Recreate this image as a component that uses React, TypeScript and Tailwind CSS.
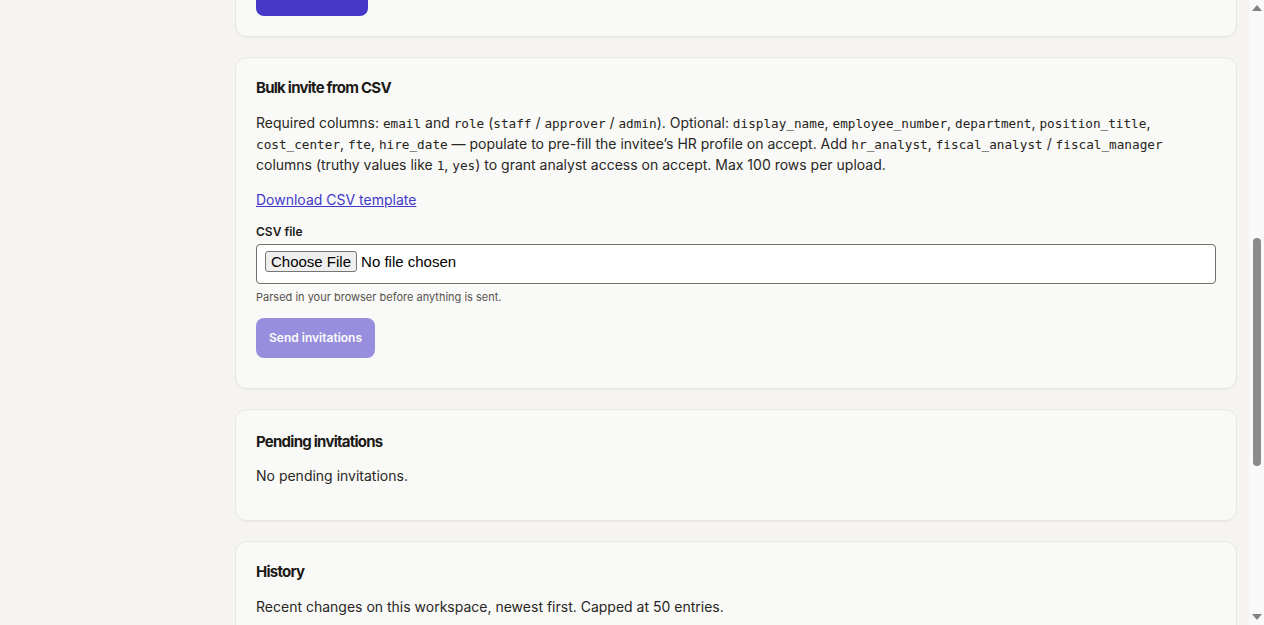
import { useLayoutEffect, useRef } from "react";

const Code = ({ children }: { children: string }) => (
  <code className="font-['DejaVu_Sans_Mono',monospace] text-[12.7px] leading-none text-[#262420]">{children}</code>
);

const Card = ({
  children,
  className = "",
  innerRef,
}: {
  children: React.ReactNode;
  className?: string;
  innerRef?: React.Ref<HTMLDivElement>;
}) => (
  <section
    ref={innerRef}
    className={`rounded-xl border border-[#e9e7e3] bg-[#f9f9f7] px-5 shadow-[0_1px_2px_rgba(0,0,0,0.04)] ${className}`}
  >
    {children}
  </section>
);

const CardTitle = ({ children }: { children: string }) => (
  <h2 className="text-[15px] leading-6 font-bold tracking-[-0.05em] text-[#1c1a17]">{children}</h2>
);

const history = [
  { who: "Dana Whitfield", what: "invited m.ortiz@northwind.org as approver", when: "2 days ago" },
  { who: "Dana Whitfield", what: "changed role of j.kim@northwind.org to admin", when: "5 days ago" },
  { who: "Sam Patel", what: "revoked invitation for temp@northwind.org", when: "1 week ago" },
  { who: "Sam Patel", what: "granted fiscal_analyst to r.lee@northwind.org", when: "2 weeks ago" },
  { who: "Dana Whitfield", what: "bulk invited 12 members from CSV", when: "3 weeks ago" },
  { who: "Dana Whitfield", what: "created workspace", when: "1 month ago" },
];

// browser scrollbar as it shows in the capture
const ScrollbarOverlay = () => (
  <div aria-hidden className="fixed top-0 right-0 flex h-screen w-[15px] flex-col items-center bg-[#f9f9f9]">
    <svg className="mt-[5px] shrink-0" width="10" height="6" viewBox="0 0 10 6">
      <path d="M5 0L10 6H0z" fill="#828282" />
    </svg>
    <div className="mt-[227px] h-[228px] w-[8px] shrink-0 rounded-full bg-[#8b8b8b]" />
    <div className="flex-1" />
    <svg className="mb-[5px] shrink-0" width="10" height="6" viewBox="0 0 10 6">
      <path d="M0 0H10L5 6z" fill="#828282" />
    </svg>
  </div>
);

export default function App() {
  const bulkRef = useRef<HTMLDivElement>(null);

  // keep the view on the CSV card, like the captured page
  useLayoutEffect(() => {
    const el = bulkRef.current;
    if (!el) return;
    const top = el.getBoundingClientRect().top + window.scrollY;
    window.scrollTo(0, top - 57);
  }, []);

  return (
    <div className="min-h-screen bg-[#f5f4f1] font-['Inter',sans-serif] text-[14px] text-[#292724]">
      <main className="ml-[235px] mr-[27px] flex flex-col gap-5 pt-8 pb-6">
        {/* Header (above the fold) */}
        <div className="flex flex-col gap-1">
          <h1 className="text-2xl font-semibold tracking-tight text-[#1c1a17]">Members</h1>
          <p className="text-[#57534e]">Manage who can access this workspace and what they can do.</p>
        </div>

        {/* Invite one */}
        <Card className="pt-5 pb-5">
          <CardTitle>Invite a teammate</CardTitle>
          <p className="mt-3 leading-[21px]">
            They will get an email with a link to join. Invitations expire after 7 days.
          </p>
          <div className="mt-4 grid grid-cols-2 gap-4">
            <label className="flex flex-col gap-1">
              <span className="text-xs font-semibold">Email</span>
              <input className="h-10 rounded border border-[#76706a] bg-white px-3" placeholder="name@company.com" />
            </label>
            <label className="flex flex-col gap-1">
              <span className="text-xs font-semibold">Role</span>
              <select className="h-10 rounded border border-[#76706a] bg-white px-3">
                <option>staff</option>
              </select>
            </label>
            <label className="flex flex-col gap-1">
              <span className="text-xs font-semibold">Display name</span>
              <input className="h-10 rounded border border-[#76706a] bg-white px-3" />
            </label>
            <label className="flex flex-col gap-1">
              <span className="text-xs font-semibold">Department</span>
              <input className="h-10 rounded border border-[#76706a] bg-white px-3" />
            </label>
          </div>
          <div className="mt-4 flex flex-col gap-2">
            <label className="flex items-center gap-2"><input type="checkbox" /> HR analyst</label>
            <label className="flex items-center gap-2"><input type="checkbox" /> Fiscal analyst</label>
            <label className="flex items-center gap-2"><input type="checkbox" /> Fiscal manager</label>
          </div>
          <p className="mt-3 text-[11px] text-[#57534e]">Analyst access is granted when the invite is accepted.</p>
          <button className="mt-3 h-10 rounded-lg bg-[#4838c8] px-[13px] text-xs font-semibold text-white">
            Send invitation
          </button>
        </Card>

        {/* Bulk invite */}
        <Card innerRef={bulkRef} className="pt-[18px] pb-[30px]">
          <CardTitle>Bulk invite from CSV</CardTitle>
          <p className="mt-[12px] leading-[21px]">
            Required columns: <Code>email</Code> and <Code>role</Code> (<Code>staff</Code> / <Code>approver</Code> /{" "}
            <Code>admin</Code>). Optional: <Code>display_name</Code>, <Code>employee_number</Code>,{" "}
            <Code>department</Code>, <Code>position_title</Code>, <Code>cost_center</Code>, <Code>fte</Code>,{" "}
            <Code>hire_date</Code> — populate to pre-fill the invitee’s HR profile on accept. Add{" "}
            <Code>hr_analyst</Code>, <Code>fiscal_analyst</Code> / <Code>fiscal_manager</Code> columns (truthy values
            like <Code>1</Code>, <Code>yes</Code>) to grant analyst access on accept. Max 100 rows per upload.
          </p>
          <a href="#" className="mt-[14px] block w-fit leading-[21px] text-[#4338ca] underline">
            Download CSV template
          </a>
          <label className="mt-[13px] block text-xs leading-[18px] font-semibold text-[#1c1a17]">CSV file</label>
          <input
            type="file"
            accept=".csv"
            className="mt-[3px] block h-10 w-full rounded-[4px] border border-[#76706a] bg-white px-2 py-[6px] font-['Liberation_Sans',Arial,sans-serif] text-[15px] leading-[21px] text-black file:mr-1 file:rounded-[3px] file:border file:border-[#767676] file:bg-[#efefef] file:px-[5px] file:py-[1px] file:leading-[17px] file:text-black"
          />
          <p className="mt-[5px] text-[11px] leading-4 text-[#57534e]">Parsed in your browser before anything is sent.</p>
          <button
            disabled
            className="mt-[13px] h-10 rounded-lg bg-[#4838c8] px-[13px] text-xs font-semibold text-white opacity-55"
          >
            Send invitations
          </button>
        </Card>

        {/* Pending */}
        <Card className="pt-5 pb-[34px]">
          <CardTitle>Pending invitations</CardTitle>
          <p className="mt-[11px] leading-[21px]">No pending invitations.</p>
        </Card>

        {/* History */}
        <Card className="pt-[18px] pb-6">
          <CardTitle>History</CardTitle>
          <p className="mt-[12px] leading-[21px]">Recent changes on this workspace, newest first. Capped at 50 entries.</p>
          <ul className="mt-4 flex flex-col divide-y divide-[#e7e5e1]">
            {history.map((h, i) => (
              <li key={i} className="flex items-center justify-between py-3">
                <span>
                  <span className="font-semibold">{h.who}</span> {h.what}
                </span>
                <span className="text-xs text-[#78716c]">{h.when}</span>
              </li>
            ))}
          </ul>
        </Card>
      </main>
      <ScrollbarOverlay />
    </div>
  );
}
